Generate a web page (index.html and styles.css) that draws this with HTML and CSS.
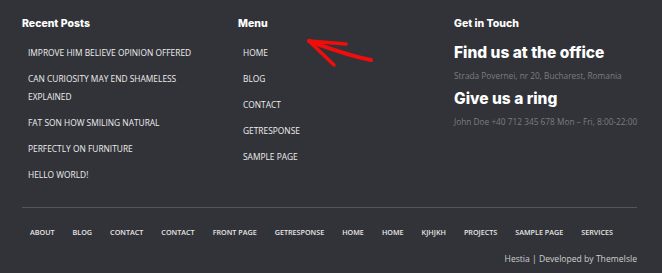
FILE: index.html
```html
<!DOCTYPE html>
<html lang="en">
  <head>
    <meta charset="UTF-8" />
    <meta name="viewport" content="width=device-width, initial-scale=1.0" />
    <title>Footer</title>
    <link rel="stylesheet" href="styles.css">
  </head>
  <body>
    <footer class="footer">
      <!-- Widget columns -->
      <div class="footer-cols">
        <div class="widget">
          <h4 class="widget-title">Recent Posts</h4>
          <ul class="widget-list">
            <li>Improve him believe opinion offered</li>
            <li>Can curiosity may end shameless explained</li>
            <li>Fat son how smiling natural</li>
            <li>Perfectly on furniture</li>
            <li>Hello world!</li>
          </ul>
        </div>
        <div class="widget">
          <h4 class="widget-title">Menu</h4>
          <ul class="widget-list menu-list">
            <li>Home</li>
            <li>Blog</li>
            <li>Contact</li>
            <li>GetResponse</li>
            <li>Sample Page</li>
          </ul>
        </div>
        <div class="widget">
          <h4 class="widget-title">Get in Touch</h4>
          <h2 class="contact-title">Find us at the office</h2>
          <p class="contact-text">Strada Povernei, nr 20, Bucharest, Romania</p>
          <h2 class="contact-title">Give us a ring</h2>
          <p class="contact-text">John Doe +40 712 345 678 Mon – Fri, 8:00-22:00</p>
        </div>
      </div>

      <hr class="divider">

      <!-- Bottom menu -->
      <ul class="bottom-menu">
        <li>About</li>
        <li>Blog</li>
        <li>Contact</li>
        <li>Contact</li>
        <li>Front Page</li>
        <li>GetResponse</li>
        <li>Home</li>
        <li>Home</li>
        <li>kjhjkh</li>
        <li>Projects</li>
        <li>Sample Page</li>
        <li>Services</li>
      </ul>
      <div class="credit">Hestia | Developed by ThemeIsle</div>

      <!-- Annotation arrow -->
      <svg class="arrow" width="80" height="40" viewBox="0 0 80 40">
        <path d="M8 10 C 25 16, 45 24, 70 29" fill="none" stroke="#f20d0d" stroke-width="4" stroke-linecap="round"/>
        <path d="M8 10 L 45 13" fill="none" stroke="#f20d0d" stroke-width="3.5" stroke-linecap="round"/>
        <path d="M8 10 L 33 34" fill="none" stroke="#f20d0d" stroke-width="3.5" stroke-linecap="round"/>
      </svg>
    </footer>
  </body>
</html>
```

FILE: styles.css
```css
/* Footer */
body {
  margin: 0;
  background-color: #323338;
  font-family: "Open Sans", sans-serif;
}

.footer {
  position: relative;
  height: 273px;
  box-sizing: border-box;
  overflow: hidden;
  padding: 17px 25px 0 22px;
  color: #fff;
}

.footer-cols {
  display: grid;
  grid-template-columns: 216px 216px 1fr;
}

.widget-title {
  margin: 0;
  font-family: "Inter", sans-serif;
  font-size: 10.5px;
  font-weight: 800;
  line-height: 14px;
}

.widget-list {
  list-style: none;
  margin: 13px 0 0;
  padding: 0 0 0 6px;
  width: 190px;
}

.widget-list li {
  font-size: 8.4px;
  font-weight: 500;
  text-transform: uppercase;
  line-height: 18px;
  margin-bottom: 8px;
  color: #eee;
}

.menu-list {
  padding-left: 5px;
}

.contact-title {
  margin: 10px 0 0;
  font-family: "Inter", sans-serif;
  font-size: 15.5px;
  font-weight: 800;
  line-height: 24px;
}

.contact-text {
  margin: 0;
  font-size: 8.3px;
  line-height: 22px;
  color: #7b7c80;
  white-space: nowrap;
}

.contact-text + .contact-title {
  margin-top: 0;
}

.divider {
  margin: 15px 0 0;
  border: 0;
  border-top: 1px solid #56575b;
}

.bottom-menu {
  list-style: none;
  display: flex;
  margin: 17px 0 0;
  padding: 0 0 0 8px;
  white-space: nowrap;
}

.bottom-menu li {
  font-size: 7.2px;
  font-weight: 600;
  text-transform: uppercase;
  line-height: 14px;
  color: #e6e6e6;
  margin-right: 18px;
}

.credit {
  margin-top: 13px;
  text-align: right;
  font-size: 8.6px;
  line-height: 14px;
  color: #cfcfd1;
}

.arrow {
  position: absolute;
  left: 301px;
  top: 31px;
}
```
